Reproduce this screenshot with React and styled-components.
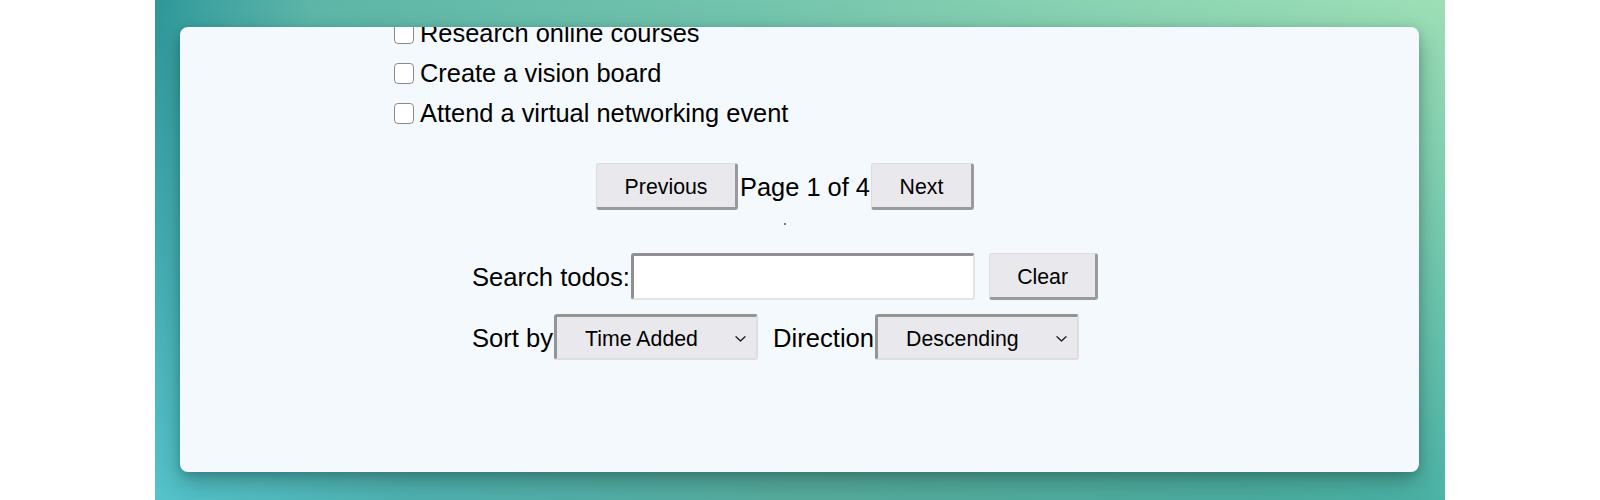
import React, { useState } from "react";
import styled, { createGlobalStyle } from "styled-components";

const GlobalStyle = createGlobalStyle`
  html, body {
    margin: 0;
    padding: 0;
    background: #ffffff;
  }
  body {
    font-family: "Liberation Sans", Arial, Helvetica, sans-serif;
    color: #000;
  }
`;

const todos = [
  { id: 1, text: "Research online courses" },
  { id: 2, text: "Create a vision board" },
  { id: 3, text: "Attend a virtual networking event" }
];

const App = () => {
  const [checked, setChecked] = useState({});
  const [search, setSearch] = useState("");
  const [sortBy, setSortBy] = useState("time");
  const [direction, setDirection] = useState("desc");

  return (
    <>
      <GlobalStyle />
      <Backdrop>
        <Card>
          <Content>
            <TodoList>
              {todos.map(todo => (
                <TodoRow key={todo.id}>
                  <Check
                    type="checkbox"
                    checked={!!checked[todo.id]}
                    onChange={() =>
                      setChecked({ ...checked, [todo.id]: !checked[todo.id] })
                    }
                  />
                  {todo.text}
                </TodoRow>
              ))}
            </TodoList>

            <Pager>
              <Button $width="142px">Previous</Button>
              <PageText>Page 1 of 4</PageText>
              <Button $width="103px">Next</Button>
            </Pager>
            <Dot />

            <Controls>
              <ControlRow>
                <Label>Search todos:</Label>
                <SearchInput
                  value={search}
                  onChange={e => setSearch(e.target.value)}
                />
                <Button $width="109px" $gap="14px" onClick={() => setSearch("")}>
                  Clear
                </Button>
              </ControlRow>
              <ControlRow>
                <Label>Sort by</Label>
                <SelectWrap>
                  <Select value={sortBy} onChange={e => setSortBy(e.target.value)}>
                    <option value="time">Time Added</option>
                    <option value="name">Name</option>
                  </Select>
                  <Chevron />
                </SelectWrap>
                <Label $gap="15px">Direction</Label>
                <SelectWrap>
                  <Select
                    value={direction}
                    onChange={e => setDirection(e.target.value)}
                  >
                    <option value="desc">Descending</option>
                    <option value="asc">Ascending</option>
                  </Select>
                  <Chevron />
                </SelectWrap>
              </ControlRow>
            </Controls>
          </Content>
        </Card>
      </Backdrop>
    </>
  );
};

const Chevron = () => (
  <ChevronIcon width="13" height="8" viewBox="0 0 13 8">
    <path
      d="M2 1.8 L6.5 6 L11 1.8"
      fill="none"
      stroke="#1a1a1a"
      strokeWidth="1.3"
      strokeLinecap="round"
      strokeLinejoin="round"
    />
  </ChevronIcon>
);

const Backdrop = styled.div`
  position: relative;
  width: 1290px;
  height: 500px;
  margin: 0 auto;
  padding: 27px 26px 0 25px;
  box-sizing: border-box;
  overflow: hidden;
  background: linear-gradient(
    to right,
    #2e9699 0%,
    #3fa3a1 4%,
    #5db6a7 12%,
    #73c4ad 45%,
    #8cd4b3 75%,
    #9ddfb6 100%
  );

  &::before {
    content: "";
    position: absolute;
    inset: 0;
    background: linear-gradient(
      to right,
      #55c3cb 0%,
      #4fb1b0 20%,
      #56ab9c 50%,
      #4aac9f 85%,
      #4bb2a6 100%
    );
    -webkit-mask-image: linear-gradient(to bottom, transparent 0%, #000 100%);
    mask-image: linear-gradient(to bottom, transparent 0%, #000 100%);
  }
`;

const Card = styled.div`
  position: relative;
  z-index: 1;
  height: 445px;
  background: #f4f9fd;
  border-radius: 8px;
  overflow: hidden;
  padding-right: 29px;
  box-shadow: 0 10px 22px rgba(20, 60, 55, 0.38), 0 2px 8px rgba(0, 0, 0, 0.14);
`;

const Content = styled.div`
  display: flex;
  flex-direction: column;
  align-items: center;
`;

const TodoList = styled.div`
  width: 782px;
  margin-top: -14px;
  display: flex;
  flex-direction: column;
`;

const TodoRow = styled.label`
  display: flex;
  align-items: center;
  height: 40px;
  font-size: 25.4px;
  white-space: nowrap;
`;

const Check = styled.input`
  appearance: none;
  -webkit-appearance: none;
  box-sizing: border-box;
  width: 20px;
  height: 21px;
  margin: 0 6px 0 0;
  border: 1px solid #8b8b8f;
  border-radius: 4px;
  background: #ffffff;
  flex-shrink: 0;

  &:checked {
    background: #2f7cf6;
    border-color: #2f7cf6;
  }
`;

const Pager = styled.div`
  display: flex;
  align-items: center;
  margin-top: 30px;
`;

const PageText = styled.span`
  font-size: 25.4px;
  white-space: nowrap;
  padding: 2px 1px 0 2px;
`;

const Button = styled.button`
  box-sizing: border-box;
  width: ${p => p.$width};
  height: 47px;
  margin-left: ${p => p.$gap || "0"};
  padding: 3px 0 0 0;
  font-family: "Liberation Sans", Arial, Helvetica, sans-serif;
  font-size: 21.3px;
  color: #000;
  background: #e9e9ed;
  border-style: solid;
  border-width: 1px 3px 3px 1px;
  border-color: #dcdce0 #9a9a9d #9a9a9d #dcdce0;
  border-radius: 3px;
`;

const Dot = styled.div`
  width: 2px;
  height: 2px;
  margin-top: 13px;
  background: #7f7f7f;
`;

const Controls = styled.div`
  width: 626px;
  margin-top: 28px;
  display: flex;
  flex-direction: column;
  gap: 14px;
`;

const ControlRow = styled.div`
  display: flex;
  align-items: center;
`;

const Label = styled.span`
  font-size: 25.6px;
  white-space: nowrap;
  margin-left: ${p => p.$gap || "0"};
  padding-top: 2px;
`;

const SearchInput = styled.input`
  box-sizing: border-box;
  width: 345px;
  height: 47px;
  margin: 0 0 0 1px;
  padding: 0 8px;
  font-family: "Liberation Sans", Arial, Helvetica, sans-serif;
  font-size: 21px;
  background: #ffffff;
  border-style: solid;
  border-width: 3px 2px 2px 3px;
  border-color: #909093 #e4e4e6 #e4e4e6 #909093;
  border-radius: 3px;
  outline: none;
`;

const SelectWrap = styled.div`
  position: relative;
  display: flex;
  margin-left: 1px;
`;

const Select = styled.select`
  appearance: none;
  -webkit-appearance: none;
  box-sizing: border-box;
  width: 204px;
  height: 46px;
  margin: 0;
  padding: 3px 30px 0 28px;
  font-family: "Liberation Sans", Arial, Helvetica, sans-serif;
  font-size: 21.3px;
  color: #000;
  background: #e9e9ed;
  border-style: solid;
  border-width: 3px 2px 2px 3px;
  border-color: #949497 #dedee1 #dedee1 #949497;
  border-radius: 3px;
  outline: none;
`;

const ChevronIcon = styled.svg`
  position: absolute;
  right: 11px;
  top: 50%;
  margin-top: -2px;
  pointer-events: none;
`;

export default App;
